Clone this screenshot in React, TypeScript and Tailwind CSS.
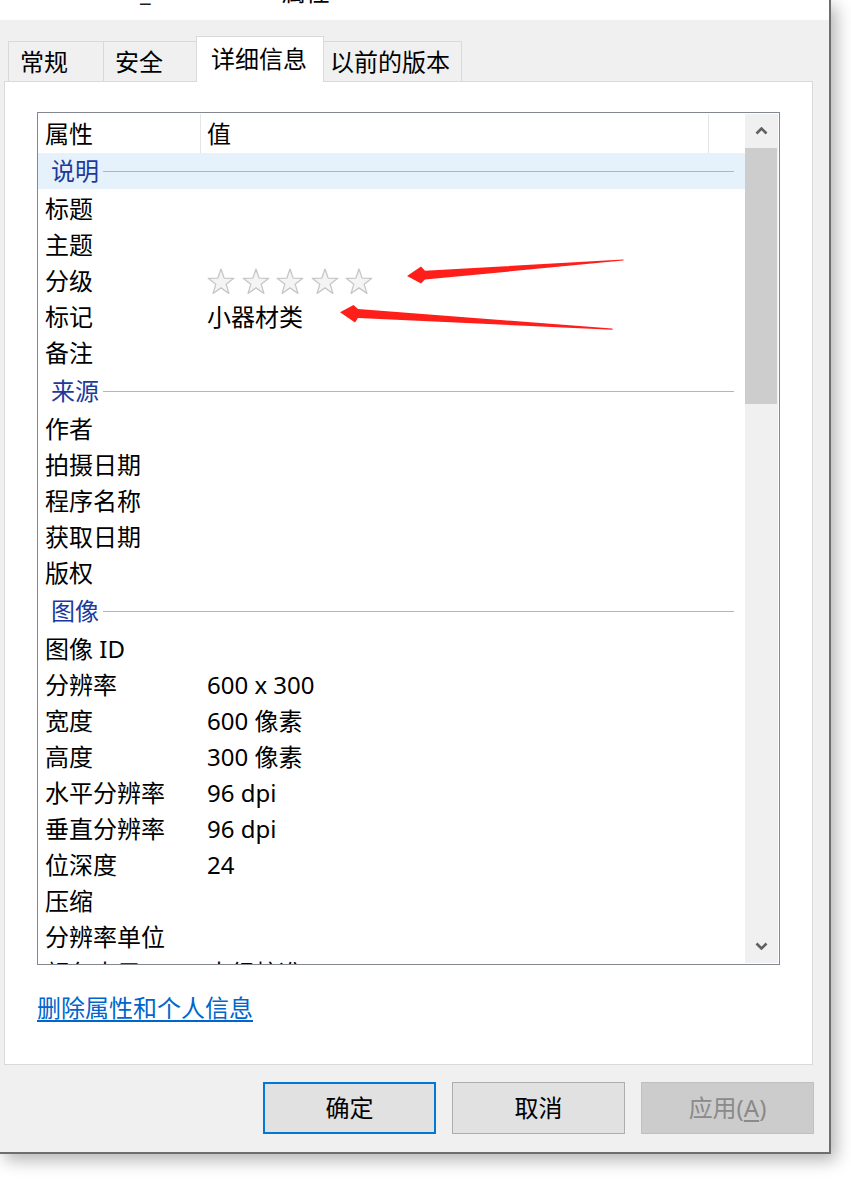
import type { ReactNode } from "react";

type Item =
  | { kind: "group"; label: string; active?: boolean }
  | { kind: "row"; name: string; value?: ReactNode };

function Star() {
  return (
    <svg width="28" height="27" viewBox="0 0 28 27" aria-hidden="true">
      <polygon
        points="14,1 17.17,10.13 26.84,10.33 19.14,16.17 21.94,25.42 14,19.9 6.06,25.42 8.86,16.17 1.16,10.33 10.83,10.13"
        fill="#f4f4f4"
        stroke="#c6c6c6"
        strokeWidth="1.3"
        strokeLinejoin="round"
      />
    </svg>
  );
}

const items: Item[] = [
  { kind: "group", label: "说明", active: true },
  { kind: "row", name: "标题" },
  { kind: "row", name: "主题" },
  {
    kind: "row",
    name: "分级",
    value: (
      <span className="flex items-center gap-[6.5px]">
        <Star />
        <Star />
        <Star />
        <Star />
        <Star />
      </span>
    ),
  },
  { kind: "row", name: "标记", value: "小器材类" },
  { kind: "row", name: "备注" },
  { kind: "group", label: "来源" },
  { kind: "row", name: "作者" },
  { kind: "row", name: "拍摄日期" },
  { kind: "row", name: "程序名称" },
  { kind: "row", name: "获取日期" },
  { kind: "row", name: "版权" },
  { kind: "group", label: "图像" },
  { kind: "row", name: "图像 ID" },
  { kind: "row", name: "分辨率", value: "600 x 300" },
  { kind: "row", name: "宽度", value: "600 像素" },
  { kind: "row", name: "高度", value: "300 像素" },
  { kind: "row", name: "水平分辨率", value: "96 dpi" },
  { kind: "row", name: "垂直分辨率", value: "96 dpi" },
  { kind: "row", name: "位深度", value: "24" },
  { kind: "row", name: "压缩" },
  { kind: "row", name: "分辨率单位" },
  { kind: "row", name: "颜色表示", value: "未经校准" },
];

function Chevron({ down }: { down?: boolean }) {
  return (
    <svg width="13" height="8" viewBox="0 0 13 8" aria-hidden="true">
      <path
        d={down ? "M1.5 1.5L6.5 6.5L11.5 1.5" : "M1.5 6.5L6.5 1.5L11.5 6.5"}
        fill="none"
        stroke="#606060"
        strokeWidth="2.6"
      />
    </svg>
  );
}

function Tab({ label, className }: { label: string; className: string }) {
  return <div className={`flex items-center leading-[32px] ${className}`}>{label}</div>;
}

export default function App() {
  return (
    <div className="relative w-[851px] h-[1189px] overflow-hidden bg-white text-[24px] text-black font-[family-name:'Noto_Sans','Noto_Sans_CJK_SC',sans-serif]">
      <div className="w-[831px] h-[1154px] bg-[#f0f0f0] border-r-2 border-b-2 border-[#6e6e6e] shadow-[5px_6px_16px_rgba(0,0,0,0.3)] flex flex-col">
        {/* title bar, top is off-screen */}
        <div className="h-[20px] bg-white overflow-hidden flex items-start leading-[32px]">
          <span className="mt-[-24px] ml-[140px] text-[#222]">_</span>
          <span className="mt-[-24px] ml-[131px]">属性</span>
          <span className="mt-[-24px] ml-auto mr-[24px] text-[22px]">✕</span>
        </div>

        {/* tabs */}
        <div className="relative z-10 -mb-px flex items-end pl-[8px] h-[62px]">
          <Tab label="常规" className="w-[95px] h-[40px] mb-px pl-[11px] border-t border-l border-[#d9d9d9]" />
          <Tab label="安全" className="w-[93px] h-[40px] mb-px pl-[11px] border-t border-l border-[#d9d9d9]" />
          <Tab label="详细信息" className="w-[128px] h-[46px] pl-[14px] pb-[1px] bg-white border-t border-l border-r border-[#d9d9d9]" />
          <Tab label="以前的版本" className="w-[138px] h-[40px] mb-px pl-[6px] border-t border-r border-[#d9d9d9]" />
        </div>

        {/* panel */}
        <div className="ml-[4px] w-[809px] h-[984px] bg-white border border-[#d9d9d9] pt-[30px] pl-[32px]">
          <div className="w-[743px] h-[853px] border border-[#828790] flex">
            <div className="flex-1 overflow-hidden">
              <div className="h-[40px] flex">
                <div className="w-[163px] mt-px border-r border-[#e5e5e5] pl-[7px] flex items-center pt-[1px]">属性</div>
                <div className="w-[508px] mt-px border-r border-[#e5e5e5] pl-[6px] flex items-center pt-[1px]">值</div>
              </div>
              {items.map((it, i) =>
                it.kind === "group" ? (
                  <div key={i} className="h-[40px]">
                    <div className={`h-[36px] flex items-center ${it.active ? "bg-[#e5f1fb]" : ""}`}>
                      <span className="pl-[13px] text-[#1c3a9e]">{it.label}</span>
                      <span className="flex-1 h-px ml-[4px] mr-[11px] bg-[#9fb7e6]" />
                    </div>
                  </div>
                ) : (
                  <div key={i} className="h-[36px] flex items-center pb-[4px] whitespace-nowrap">
                    <span className="w-[163px] pl-[7px] shrink-0">{it.name}</span>
                    <span className="pl-[6px] flex">{it.value}</span>
                  </div>
                )
              )}
            </div>
            <div className="w-[33px] my-px mr-px bg-[#f0f0f0] flex flex-col">
              <div className="h-[34px] flex items-center justify-center">
                <Chevron />
              </div>
              <div className="h-[256px] w-[32px] bg-[#cdcdcd]" />
              <div className="flex-1" />
              <div className="h-[34px] flex items-center justify-center">
                <Chevron down />
              </div>
            </div>
          </div>
          <div className="mt-[27px] leading-[32px]">
            <span className="text-[#0066cc] underline underline-offset-[3px]">删除属性和个人信息</span>
          </div>
        </div>

        {/* buttons */}
        <div className="mt-[17px] flex justify-end gap-[16px] pr-[15px]">
          <button className="w-[173px] h-[52px] bg-[#e1e1e1] border-2 border-[#0078d7] flex items-center justify-center">
            确定
          </button>
          <button className="w-[173px] h-[52px] bg-[#e1e1e1] border border-[#adadad] flex items-center justify-center">
            取消
          </button>
          <button className="w-[173px] h-[52px] bg-[#cccccc] border border-[#bfbfbf] text-[#8a8a8a] flex items-center justify-center">
            应用(<span className="underline underline-offset-[3px]">A</span>)
          </button>
        </div>
      </div>

      {/* red annotation arrows */}
      <svg className="absolute inset-0 pointer-events-none" width="851" height="1189" viewBox="0 0 851 1189" aria-hidden="true">
        <polygon points="407,276 421,266.5 425,270.8 623,259.4 624,260 623,260.6 425,279.5 421,283.5" fill="#ff1f1a" />
        <polygon points="340,312.3 353.5,305 358,309 612,328.6 613,329.2 612,329.8 358,318 355,322.5" fill="#ff1f1a" />
      </svg>
    </div>
  );
}
